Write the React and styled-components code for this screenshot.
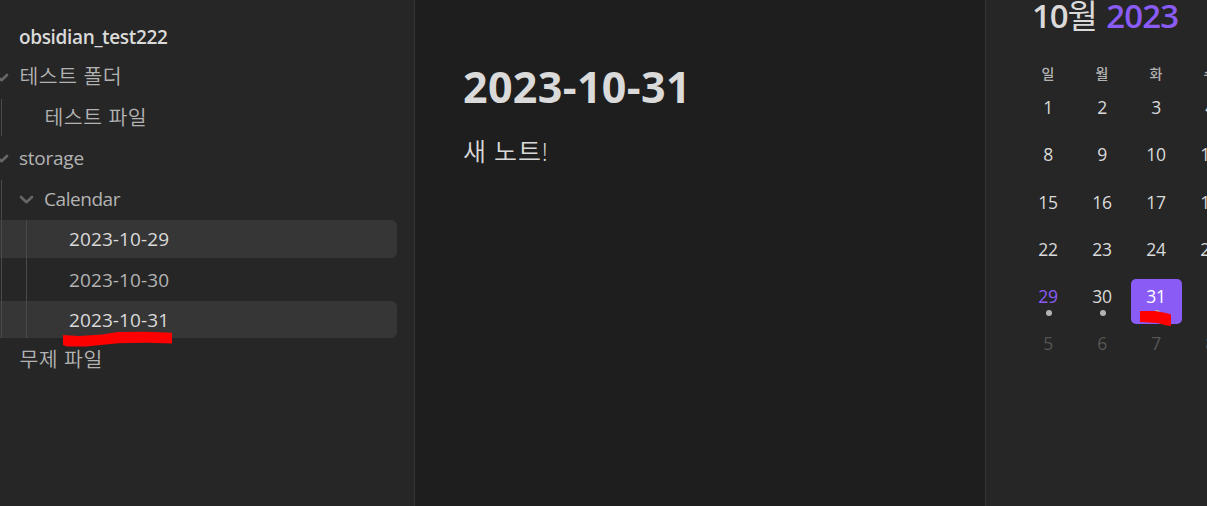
import React from 'react';
import styled, { createGlobalStyle } from 'styled-components';

const GlobalStyle = createGlobalStyle`
    * {
        box-sizing: border-box;
    }
    body {
        margin: 0;
        background: #1e1e1e;
        color: #dadada;
        font-family: "Open Sans", "Noto Sans CJK KR", sans-serif;
        overflow: hidden;
    }
`;

const Workspace = styled.div`
    display: flex;
    width: 1207px;
    height: 506px;
    overflow: hidden;
`;

const Sidebar = styled.aside`
    flex: 0 0 415px;
    padding-top: 18px;
    background: #262626;
    border-right: 1px solid #363636;
`;

const VaultName = styled.div`
    height: 40px;
    padding-left: 19px;
    font-size: 19px;
    line-height: 38px;
    font-weight: 600;
    letter-spacing: -0.35px;
`;

const Tree = styled.div`
    display: flex;
    flex-direction: column;
    gap: 3px;
    width: 397px;
`;

const Children = styled.div`
    position: relative;
    display: flex;
    flex-direction: column;
    gap: 3px;

    &::after {
        content: "";
        position: absolute;
        top: 0;
        bottom: 0;
        left: ${props => props.$guide}px;
        width: 1px;
        background: #4a4a4a;
    }
`;

const Row = styled.div`
    position: relative;
    height: ${props => props.$height || 37.5}px;
    padding-left: ${props => props.$indent + (props.$korean ? 0.5 : 0)}px;
    border-radius: 0 6px 6px 0;
    background: ${props => props.$active ? '#363636' : 'transparent'};
    color: ${props => props.$active ? '#dadada' : '#b3b3b3'};
    font-size: ${props => props.$korean ? 20.5 : 19}px;
    font-weight: ${props => props.$korean ? 350 : 400};
    line-height: ${props => props.$korean ? 36 : 38}px;
    letter-spacing: ${props => props.$korean ? 0.5 : (props.$spacing || 0)}px;
    white-space: nowrap;
`;

const Chevron = styled.svg`
    position: absolute;
    top: 12px;
    left: ${props => props.$left}px;
    width: 15px;
    height: 15px;
    fill: none;
    stroke: #666666;
    stroke-width: 2.6;
    stroke-linecap: round;
    stroke-linejoin: round;
`;

const Marker = styled.svg`
    position: absolute;
    left: ${props => props.$left}px;
    top: ${props => props.$top}px;
    z-index: 2;
    fill: #ff0000;
`;

const Note = styled.main`
    flex: 0 0 570px;
    padding: 57px 0 0 48px;
    background: #1e1e1e;
`;

const NoteTitle = styled.h1`
    margin: 0;
    font-size: 43px;
    line-height: 60px;
    font-weight: 700;
    letter-spacing: 0.35px;
`;

const NoteText = styled.p`
    margin: 16px 0 0;
    font-size: 25px;
    line-height: 36px;
    font-weight: 350;
    letter-spacing: 0.8px;
`;

const CalendarPane = styled.aside`
    flex: 0 0 222px;
    overflow: hidden;
    background: #262626;
    border-left: 1px solid #363636;
`;

const Month = styled.h2`
    height: 60px;
    margin: 0;
    padding-left: 46px;
    font-size: 33px;
    line-height: 31px;
    font-weight: 600;
    letter-spacing: -1.1px;
    white-space: nowrap;
`;

const MonthUnit = styled.span`
    margin-right: 2px;
    font-weight: 400;
`;

const Year = styled.span`
    color: #8a5cf5;
    letter-spacing: -0.9px;
`;

// only four weekday columns are wide enough to show in the pane
const Grid = styled.div`
    display: grid;
    grid-template-columns: repeat(4, 54px);
    margin-left: 35px;
`;

const WeekDay = styled.div`
    height: 29px;
    color: #b3b3b3;
    font-size: 14px;
    line-height: 27px;
    font-weight: 500;
    text-align: center;
`;

const Day = styled.div`
    position: relative;
    height: 45px;
    margin: 1px 1.5px 1.3px;
    border-radius: 5px;
    background: ${props => props.$selected ? '#8a5cf5' : 'transparent'};
    color: ${props => props.$selected ? '#ffffff' : props.$today ? '#8a5cf5' : props.$outside ? '#555555' : '#dadada'};
    font-size: 17.5px;
    line-height: 35.4px;
    letter-spacing: -0.3px;
    text-align: center;
`;

const Dot = styled.i`
    position: absolute;
    top: 31.3px;
    left: 23.3px;
    width: 6px;
    height: 6px;
    border-radius: 50%;
    background: #b3b3b3;
`;

const weekDays = ['일', '월', '화', '수'];

const days = [];
for (let i = 0; i < 42; i++) {
    if (i % 7 >= weekDays.length) continue;
    days.push({
        id: i,
        date: i < 31 ? i + 1 : i - 30,
        today: i === 28,
        selected: i === 30,
        outside: i > 30,
        hasNote: i >= 28 && i <= 30,
    });
}

const Arrow = ({ left }) => (
    <Chevron $left={left} viewBox="0 0 15 15">
        <path d="M2 5 L7.5 10.2 L13 5" />
    </Chevron>
);

const FileTree = () => (
    <Tree>
        <Row $indent={19} $korean>
            <Arrow left={-6} />테스트 폴더
        </Row>
        <Children $guide={1}>
            <Row $indent={44} $korean>테스트 파일</Row>
        </Children>
        <Row $indent={19} $spacing={-0.25}>
            <Arrow left={-6} />storage
        </Row>
        <Children $guide={1}>
            <Row $indent={44} $spacing={-0.45}>
                <Arrow left={19} />Calendar
            </Row>
            <Children $guide={26}>
                <Row $indent={69} $active $spacing={0.1}>2023-10-29</Row>
                <Row $indent={69} $spacing={0.1}>2023-10-30</Row>
                <Row $indent={69} $height={37} $active $spacing={0.1}>
                    2023-10-31
                    <Marker $left={62} $top={30} width="112" height="17" viewBox="0 0 112 17">
                        <path d="M1 4 L17 5 L40 3.5 L56 1 L82 0.7 L110 1.7 L110 12.5 L84 11.8 L56 12.2 L24 15.5 L5 15.5 L1 14 Z" />
                    </Marker>
                </Row>
            </Children>
        </Children>
        <Row $indent={19} $korean>무제 파일</Row>
    </Tree>
);

const Calendar = () => (
    <CalendarPane>
        <Month>10<MonthUnit>월</MonthUnit> <Year>2023</Year></Month>
        <Grid>
            {weekDays.map(name => <WeekDay key={name}>{name}</WeekDay>)}
            {
                days.map(day => (
                    <Day key={day.id} $today={day.today} $selected={day.selected} $outside={day.outside}>
                        {day.date}
                        {day.hasNote && <Dot />}
                        {
                            day.selected &&
                            <Marker $left={8} $top={31} width="34" height="17" viewBox="0 0 34 17">
                                <path d="M1 1 L16 1 L27 3 L32 4.5 L32 16 L28 15.5 L18 13 L1 12 Z" />
                            </Marker>
                        }
                    </Day>
                ))
            }
        </Grid>
    </CalendarPane>
);

const App = () => (
    <>
        <GlobalStyle />
        <Workspace>
            <Sidebar>
                <VaultName>obsidian_test222</VaultName>
                <FileTree />
            </Sidebar>
            <Note>
                <NoteTitle>2023-10-31</NoteTitle>
                <NoteText>새 노트!</NoteText>
            </Note>
            <Calendar />
        </Workspace>
    </>
);

export default App;
